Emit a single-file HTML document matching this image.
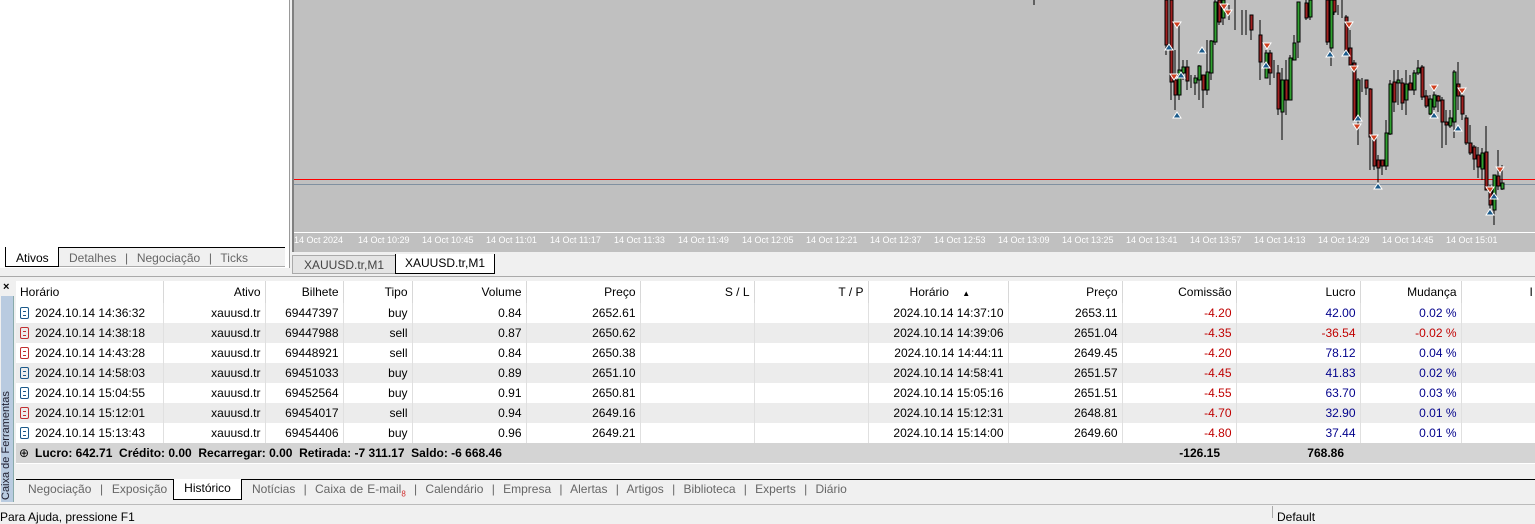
<!DOCTYPE html>
<html><head><meta charset="utf-8"><style>
*{margin:0;padding:0;box-sizing:border-box}
body{width:1535px;height:518px;overflow:hidden;background:#f0f0f0;font-family:"Liberation Sans","DejaVu Sans",sans-serif;font-size:12px;color:#000;position:relative}
.abs{position:absolute}
.tab{position:absolute;top:0;height:18px;line-height:18px;color:#666;font-size:12px;white-space:nowrap}
table{border-collapse:collapse;table-layout:fixed;position:absolute;left:16px;top:281px;width:1540px}
td{height:20px;padding:0 4px;white-space:nowrap;overflow:hidden;font-size:12px;border-right:1px solid #e0e0e0}
tr.h td{border-right:1px solid #d8d8d8;height:22px}
tr.a td{background:#fff}
tr.b td{background:#ececec}
.r{text-align:right}.red{color:#c00000}.blue{color:#00008b}
.ic{display:inline-block;width:9px;height:12px;border:1px solid #1a5a8a;border-radius:2px;vertical-align:-2px;margin-right:6px;position:relative}
.ic::after{content:"";position:absolute;left:2px;top:3px;width:3px;height:3px;border-top:1px solid #1a5a8a;border-bottom:1px solid #1a5a8a}
.ic.s{border-color:#c03030}.ic.s::after{border-color:#c03030}
</style></head><body>
<!-- left panel -->
<div class="abs" style="left:0;top:0;width:290px;height:268px;background:#fff;border-right:1px solid #999"></div>
<div class="abs" style="left:5px;top:247px;width:280px;height:1px;background:#000"></div>
<div class="abs" style="left:5px;top:248px;width:280px;height:19px;background:#f0f0f0;border-bottom:1px solid #aaa"></div>
<div class="abs" style="left:5px;top:247px;width:54px;height:20px;background:#fff;border:1px solid #000;border-top:none"></div>
<div class="tab" style="left:16px;top:249px;color:#000">Ativos</div>
<div class="tab" style="left:69px;top:249px;word-spacing:1px">Detalhes &nbsp;|&nbsp; Negociação &nbsp;|&nbsp; Ticks</div>
<!-- chart -->
<div class="abs" style="left:292px;top:0;width:1243px;height:252px;background:#c0c0c0;border-left:2px solid #808080"></div>
<div class="abs" style="left:294px;top:232px;width:1241px;height:1px;background:#fff"></div>
<div class="abs" style="left:294px;top:235px;width:1241px;font-size:9px;color:#fff;white-space:nowrap;word-spacing:0">
<span style="display:inline-block;width:64px">14 Oct 2024</span><span style="display:inline-block;width:64px">14 Oct 10:29</span><span style="display:inline-block;width:64px">14 Oct 10:45</span><span style="display:inline-block;width:64px">14 Oct 11:01</span><span style="display:inline-block;width:64px">14 Oct 11:17</span><span style="display:inline-block;width:64px">14 Oct 11:33</span><span style="display:inline-block;width:64px">14 Oct 11:49</span><span style="display:inline-block;width:64px">14 Oct 12:05</span><span style="display:inline-block;width:64px">14 Oct 12:21</span><span style="display:inline-block;width:64px">14 Oct 12:37</span><span style="display:inline-block;width:64px">14 Oct 12:53</span><span style="display:inline-block;width:64px">14 Oct 13:09</span><span style="display:inline-block;width:64px">14 Oct 13:25</span><span style="display:inline-block;width:64px">14 Oct 13:41</span><span style="display:inline-block;width:64px">14 Oct 13:57</span><span style="display:inline-block;width:64px">14 Oct 14:13</span><span style="display:inline-block;width:64px">14 Oct 14:29</span><span style="display:inline-block;width:64px">14 Oct 14:45</span><span style="display:inline-block;width:64px">14 Oct 15:01</span></div>
<svg class="abs" style="left:0;top:0" width="1535" height="232">
<line x1="294" y1="184.5" x2="1535" y2="184.5" stroke="#8090a0" stroke-width="1"/>
<line x1="294" y1="179.5" x2="1535" y2="179.5" stroke="#ff0000" stroke-width="1"/>
<g stroke="#000" stroke-width="1">
<line x1="1034" y1="0" x2="1034" y2="5"/>
<line x1="1166" y1="0" x2="1166" y2="55"/><rect x="1165" y="0" width="3" height="45" fill="#a02020"/>
<line x1="1171" y1="0" x2="1171" y2="100"/><rect x="1170" y="0" width="3" height="82" fill="#a02020"/>
<line x1="1175" y1="50" x2="1175" y2="110"/><rect x="1174" y="80" width="3" height="15" fill="#a02020"/>
<line x1="1179" y1="25" x2="1179" y2="100"/><rect x="1178" y="70" width="3" height="25" fill="#30a030"/>
<line x1="1183" y1="60" x2="1183" y2="80"/><rect x="1182" y="67" width="3" height="6" fill="#30a030"/>
<line x1="1187" y1="60" x2="1187" y2="90"/><rect x="1186" y="67" width="3" height="14" fill="#a02020"/>
<line x1="1191" y1="75" x2="1191" y2="88"/>
<line x1="1195" y1="75" x2="1195" y2="95"/><rect x="1194" y="78" width="3" height="5" fill="#30a030"/>
<line x1="1199" y1="65" x2="1199" y2="100"/><rect x="1198" y="66" width="3" height="14" fill="#30a030"/>
<line x1="1203" y1="75" x2="1203" y2="108"/><rect x="1202" y="75" width="3" height="15" fill="#a02020"/>
<line x1="1207" y1="40" x2="1207" y2="95"/><rect x="1206" y="72" width="3" height="18" fill="#30a030"/>
<line x1="1211" y1="40" x2="1211" y2="80"/><rect x="1210" y="41" width="3" height="32" fill="#30a030"/>
<line x1="1215" y1="0" x2="1215" y2="45"/><rect x="1214" y="2" width="3" height="40" fill="#30a030"/>
<line x1="1219" y1="0" x2="1219" y2="25"/><rect x="1218" y="0" width="3" height="22" fill="#a02020"/>
<line x1="1223" y1="0" x2="1223" y2="25"/><rect x="1222" y="0" width="3" height="18" fill="#30a030"/>
<line x1="1229" y1="5" x2="1229" y2="20"/>
<line x1="1235" y1="0" x2="1235" y2="30"/>
<line x1="1242" y1="10" x2="1242" y2="35"/>
<line x1="1246" y1="10" x2="1246" y2="35"/>
<line x1="1251" y1="15" x2="1251" y2="40"/><rect x="1250" y="15" width="3" height="15" fill="#a02020"/>
<line x1="1260" y1="20" x2="1260" y2="80"/><rect x="1259" y="35" width="3" height="27" fill="#a02020"/>
<line x1="1266" y1="50" x2="1266" y2="78"/><rect x="1265" y="53" width="3" height="25" fill="#30a030"/>
<line x1="1270" y1="50" x2="1270" y2="85"/><rect x="1269" y="53" width="3" height="20" fill="#a02020"/>
<line x1="1274" y1="60" x2="1274" y2="78"/>
<line x1="1278" y1="65" x2="1278" y2="115"/><rect x="1277" y="73" width="3" height="36" fill="#a02020"/>
<line x1="1282" y1="68" x2="1282" y2="140"/><rect x="1281" y="80" width="3" height="32" fill="#30a030"/>
<line x1="1286" y1="60" x2="1286" y2="115"/><rect x="1285" y="80" width="3" height="20" fill="#a02020"/>
<line x1="1290" y1="55" x2="1290" y2="100"/><rect x="1289" y="58" width="3" height="42" fill="#30a030"/>
<line x1="1294" y1="35" x2="1294" y2="60"/><rect x="1293" y="43" width="3" height="17" fill="#30a030"/>
<line x1="1298" y1="30" x2="1298" y2="58"/><rect x="1297" y="2" width="3" height="40" fill="#30a030"/>
<line x1="1306" y1="0" x2="1306" y2="20"/><rect x="1305" y="3" width="3" height="15" fill="#a02020"/>
<line x1="1310" y1="0" x2="1310" y2="20"/><rect x="1309" y="0" width="3" height="17" fill="#30a030"/>
<line x1="1327" y1="0" x2="1327" y2="45"/><rect x="1326" y="0" width="3" height="42" fill="#a02020"/>
<line x1="1331" y1="0" x2="1331" y2="66"/><rect x="1330" y="0" width="3" height="48" fill="#30a030"/>
<line x1="1334" y1="0" x2="1334" y2="15"/><rect x="1333" y="0" width="3" height="12" fill="#a02020"/>
<line x1="1338" y1="5" x2="1338" y2="15"/>
<line x1="1342" y1="0" x2="1342" y2="18"/>
<line x1="1346" y1="15" x2="1346" y2="55"/><rect x="1345" y="17" width="3" height="37" fill="#a02020"/>
<line x1="1350" y1="30" x2="1350" y2="65"/><rect x="1349" y="48" width="3" height="17" fill="#a02020"/>
<line x1="1354" y1="60" x2="1354" y2="120"/><rect x="1353" y="63" width="3" height="57" fill="#a02020"/>
<line x1="1358" y1="78" x2="1358" y2="145"/><rect x="1357" y="80" width="3" height="40" fill="#30a030"/>
<line x1="1362" y1="78" x2="1362" y2="92"/>
<line x1="1366" y1="80" x2="1366" y2="95"/><rect x="1365" y="80" width="3" height="8" fill="#a02020"/>
<line x1="1370" y1="88" x2="1370" y2="170"/><rect x="1369" y="89" width="3" height="48" fill="#a02020"/>
<line x1="1374" y1="135" x2="1374" y2="170"/><rect x="1373" y="136" width="3" height="30" fill="#a02020"/>
<line x1="1378" y1="155" x2="1378" y2="186"/><rect x="1377" y="160" width="3" height="8" fill="#a02020"/>
<line x1="1382" y1="160" x2="1382" y2="175"/><rect x="1381" y="160" width="3" height="6" fill="#a02020"/>
<line x1="1386" y1="120" x2="1386" y2="170"/><rect x="1385" y="133" width="3" height="33" fill="#30a030"/>
<line x1="1390" y1="80" x2="1390" y2="135"/><rect x="1389" y="84" width="3" height="50" fill="#30a030"/>
<line x1="1394" y1="70" x2="1394" y2="112"/><rect x="1393" y="82" width="3" height="20" fill="#a02020"/>
<line x1="1398" y1="70" x2="1398" y2="105"/><rect x="1397" y="80" width="3" height="3" fill="#30a030"/>
<line x1="1402" y1="78" x2="1402" y2="110"/><rect x="1401" y="83" width="3" height="20" fill="#a02020"/>
<line x1="1406" y1="70" x2="1406" y2="115"/><rect x="1405" y="84" width="3" height="16" fill="#30a030"/>
<line x1="1410" y1="75" x2="1410" y2="90"/><rect x="1409" y="83" width="3" height="7" fill="#a02020"/>
<line x1="1414" y1="70" x2="1414" y2="95"/><rect x="1413" y="73" width="3" height="17" fill="#30a030"/>
<line x1="1418" y1="60" x2="1418" y2="75"/><rect x="1417" y="68" width="3" height="5" fill="#30a030"/>
<line x1="1422" y1="65" x2="1422" y2="100"/><rect x="1421" y="67" width="3" height="30" fill="#a02020"/>
<line x1="1426" y1="90" x2="1426" y2="108"/><rect x="1425" y="96" width="3" height="10" fill="#a02020"/>
<line x1="1430" y1="95" x2="1430" y2="115"/><rect x="1429" y="99" width="3" height="15" fill="#30a030"/>
<line x1="1434" y1="90" x2="1434" y2="110"/><rect x="1433" y="95" width="3" height="12" fill="#30a030"/>
<line x1="1438" y1="95" x2="1438" y2="112"/><rect x="1437" y="96" width="3" height="5" fill="#a02020"/>
<line x1="1442" y1="97" x2="1442" y2="148"/><rect x="1441" y="100" width="3" height="22" fill="#a02020"/>
<line x1="1446" y1="110" x2="1446" y2="145"/><rect x="1445" y="122" width="3" height="3" fill="#a02020"/>
<line x1="1450" y1="110" x2="1450" y2="128"/><rect x="1449" y="118" width="3" height="8" fill="#30a030"/>
<line x1="1454" y1="70" x2="1454" y2="138"/><rect x="1453" y="72" width="3" height="50" fill="#30a030"/>
<line x1="1458" y1="62" x2="1458" y2="110"/><rect x="1457" y="84" width="3" height="12" fill="#a02020"/>
<line x1="1462" y1="92" x2="1462" y2="120"/><rect x="1461" y="96" width="3" height="18" fill="#a02020"/>
<line x1="1466" y1="115" x2="1466" y2="145"/><rect x="1465" y="118" width="3" height="25" fill="#a02020"/>
<line x1="1470" y1="125" x2="1470" y2="155"/><rect x="1469" y="143" width="3" height="10" fill="#a02020"/>
<line x1="1474" y1="145" x2="1474" y2="170"/><rect x="1473" y="147" width="3" height="12" fill="#a02020"/>
<line x1="1478" y1="147" x2="1478" y2="178"/><rect x="1477" y="155" width="3" height="12" fill="#a02020"/>
<line x1="1482" y1="148" x2="1482" y2="180"/><rect x="1481" y="153" width="3" height="16" fill="#30a030"/>
<line x1="1486" y1="126" x2="1486" y2="190"/><rect x="1485" y="152" width="3" height="38" fill="#a02020"/>
<line x1="1490" y1="185" x2="1490" y2="210"/><rect x="1489" y="190" width="3" height="15" fill="#a02020"/>
<line x1="1494" y1="175" x2="1494" y2="225"/><rect x="1493" y="175" width="3" height="35" fill="#30a030"/>
<line x1="1498" y1="150" x2="1498" y2="190"/><rect x="1497" y="176" width="3" height="10" fill="#a02020"/>
<line x1="1502" y1="165" x2="1502" y2="190"/><rect x="1501" y="183" width="3" height="6" fill="#30a030"/>
</g>
<g fill="#d04020" stroke="#fff" stroke-width="1">
<path d="M1173 22h8l-4 6z"/><path d="M1170 74h8l-4 6z"/><path d="M1224 10h8l-4 6z"/><path d="M1263 43h8l-4 6z"/><path d="M1345 22h8l-4 6z"/><path d="M1350 66h8l-4 6z"/><path d="M1353 124h8l-4 6z"/><path d="M1370 135h8l-4 6z"/><path d="M1430 85h8l-4 6z"/><path d="M1458 88h8l-4 6z"/><path d="M1486 187h8l-4 6z"/><path d="M1496 167h8l-4 6z"/><path d="M1220 4h8l-4 6z"/>
</g>
<g fill="#1a5a8a" stroke="#fff" stroke-width="1">
<path d="M1165 50h8l-4 -6z"/><path d="M1173 118h8l-4 -6z"/><path d="M1177 78h8l-4 -6z"/><path d="M1262 68h8l-4 -6z"/><path d="M1326 57h8l-4 -6z"/><path d="M1342 56h8l-4 -6z"/><path d="M1354 121h8l-4 -6z"/><path d="M1374 189h8l-4 -6z"/><path d="M1430 118h8l-4 -6z"/><path d="M1454 131h8l-4 -6z"/><path d="M1486 215h8l-4 -6z"/><path d="M1490 199h8l-4 -6z"/><path d="M1198 53h8l-4 -6z"/>
</g>
</svg>
<!-- chart tabs -->
<div class="abs" style="left:292px;top:254px;width:1243px;height:20px;background:#f0f0f0"></div>
<div class="abs" style="left:292px;top:255px;width:104px;height:19px;background:#e4e4e4;border:1px solid #aaa;text-align:center;line-height:18px;color:#444">XAUUSD.tr,M1</div>
<div class="abs" style="left:395px;top:254px;width:100px;height:20px;background:#fff;border:1px solid #000;border-top:none;text-align:center;line-height:18px">XAUUSD.tr,M1</div>
<div class="abs" style="left:0;top:276px;width:1535px;height:1px;background:#aaa"></div>
<!-- toolbox strip -->
<div class="abs" style="left:3px;top:281px;font-size:11px;font-weight:bold">×</div>
<div class="abs" style="left:1px;top:296px;width:13px;height:206px;background:#b9cbe0;border-right:1px solid #8aa"></div>
<div class="abs" style="left:-2px;top:500px;transform:rotate(-90deg);transform-origin:0 0;font-size:11px;color:#223;white-space:nowrap;line-height:17px">Caixa de Ferramentas</div>
<div class="abs" style="left:16px;top:281px;width:1519px;height:183px;background:#fff"></div>
<table>
<colgroup><col style="width:147px"><col style="width:102px"><col style="width:78px"><col style="width:69px"><col style="width:114px"><col style="width:114px"><col style="width:114px"><col style="width:114px"><col style="width:140px"><col style="width:114px"><col style="width:114px"><col style="width:124px"><col style="width:101px"><col style="width:155px"></colgroup>
<tr class="h a"><td>Horário</td><td class="r">Ativo</td><td class="r">Bilhete</td><td class="r">Tipo</td><td class="r">Volume</td><td class="r">Preço</td><td class="r">S / L</td><td class="r">T / P</td><td class="r">Horário &nbsp;&nbsp;&nbsp;<span style="font-size:8px">▲</span>&nbsp;&nbsp;&nbsp;&nbsp;&nbsp;&nbsp;&nbsp;&nbsp;&nbsp;&nbsp;</td><td class="r">Preço</td><td class="r">Comissão</td><td class="r">Lucro</td><td class="r">Mudança</td><td class="r" style="text-align:left;padding-left:68px">I</td></tr>
<tr class="a"><td><span class="ic"></span>2024.10.14 14:36:32</td><td class="r">xauusd.tr</td><td class="r">69447397</td><td class="r">buy</td><td class="r">0.84</td><td class="r">2652.61</td><td></td><td></td><td class="r">2024.10.14 14:37:10</td><td class="r">2653.11</td><td class="r red">-4.20</td><td class="r blue">42.00</td><td class="r blue">0.02 %</td><td></td></tr>
<tr class="b"><td><span class="ic s"></span>2024.10.14 14:38:18</td><td class="r">xauusd.tr</td><td class="r">69447988</td><td class="r">sell</td><td class="r">0.87</td><td class="r">2650.62</td><td></td><td></td><td class="r">2024.10.14 14:39:06</td><td class="r">2651.04</td><td class="r red">-4.35</td><td class="r red">-36.54</td><td class="r red">-0.02 %</td><td></td></tr>
<tr class="a"><td><span class="ic s"></span>2024.10.14 14:43:28</td><td class="r">xauusd.tr</td><td class="r">69448921</td><td class="r">sell</td><td class="r">0.84</td><td class="r">2650.38</td><td></td><td></td><td class="r">2024.10.14 14:44:11</td><td class="r">2649.45</td><td class="r red">-4.20</td><td class="r blue">78.12</td><td class="r blue">0.04 %</td><td></td></tr>
<tr class="b"><td><span class="ic"></span>2024.10.14 14:58:03</td><td class="r">xauusd.tr</td><td class="r">69451033</td><td class="r">buy</td><td class="r">0.89</td><td class="r">2651.10</td><td></td><td></td><td class="r">2024.10.14 14:58:41</td><td class="r">2651.57</td><td class="r red">-4.45</td><td class="r blue">41.83</td><td class="r blue">0.02 %</td><td></td></tr>
<tr class="a"><td><span class="ic"></span>2024.10.14 15:04:55</td><td class="r">xauusd.tr</td><td class="r">69452564</td><td class="r">buy</td><td class="r">0.91</td><td class="r">2650.81</td><td></td><td></td><td class="r">2024.10.14 15:05:16</td><td class="r">2651.51</td><td class="r red">-4.55</td><td class="r blue">63.70</td><td class="r blue">0.03 %</td><td></td></tr>
<tr class="b"><td><span class="ic s"></span>2024.10.14 15:12:01</td><td class="r">xauusd.tr</td><td class="r">69454017</td><td class="r">sell</td><td class="r">0.94</td><td class="r">2649.16</td><td></td><td></td><td class="r">2024.10.14 15:12:31</td><td class="r">2648.81</td><td class="r red">-4.70</td><td class="r blue">32.90</td><td class="r blue">0.01 %</td><td></td></tr>
<tr class="a"><td><span class="ic"></span>2024.10.14 15:13:43</td><td class="r">xauusd.tr</td><td class="r">69454406</td><td class="r">buy</td><td class="r">0.96</td><td class="r">2649.21</td><td></td><td></td><td class="r">2024.10.14 15:14:00</td><td class="r">2649.60</td><td class="r red">-4.80</td><td class="r blue">37.44</td><td class="r blue">0.01 %</td><td></td></tr>
</table>
<div class="abs" style="left:16px;top:443px;width:1519px;height:20px;background:#d4d4d4;font-weight:bold;line-height:20px;white-space:nowrap">
<span style="position:absolute;left:3px;font-weight:normal">⊕</span><span style="position:absolute;left:19px">Lucro: 642.71 &nbsp;Crédito: 0.00 &nbsp;Recarregar: 0.00 &nbsp;Retirada: -7 311.17 &nbsp;Saldo: -6 668.46</span>
<span style="position:absolute;right:315px">-126.15</span><span style="position:absolute;right:191px">768.86</span></div>
<!-- bottom tabs -->
<div class="abs" style="left:16px;top:479px;width:1519px;height:1px;background:#000"></div>
<div class="abs" style="left:173px;top:479px;width:69px;height:21px;background:#fff;border:1px solid #000;border-top:none;text-align:center;line-height:19px">Histórico</div>
<div class="tab" style="left:28px;top:480px;word-spacing:1px">Negociação &nbsp;|&nbsp; Exposição</div>
<div class="tab" style="left:252px;top:480px;word-spacing:0.8px">Notícias &nbsp;|&nbsp; Caixa de E-mail<sub style="color:#d03030;font-size:8px">8</sub> &nbsp;|&nbsp; Calendário &nbsp;|&nbsp; Empresa &nbsp;|&nbsp; Alertas &nbsp;|&nbsp; Artigos &nbsp;|&nbsp; Biblioteca &nbsp;|&nbsp; Experts &nbsp;|&nbsp; Diário</div>
<div class="abs" style="left:0;top:504px;width:1535px;height:1px;background:#bbb"></div>
<div class="abs" style="left:0;top:510px;font-size:12px">Para Ajuda, pressione F1</div>
<div class="abs" style="left:1272px;top:506px;width:1px;height:12px;background:#aaa"></div>
<div class="abs" style="left:1277px;top:510px;font-size:12px">Default</div>
</body></html>
